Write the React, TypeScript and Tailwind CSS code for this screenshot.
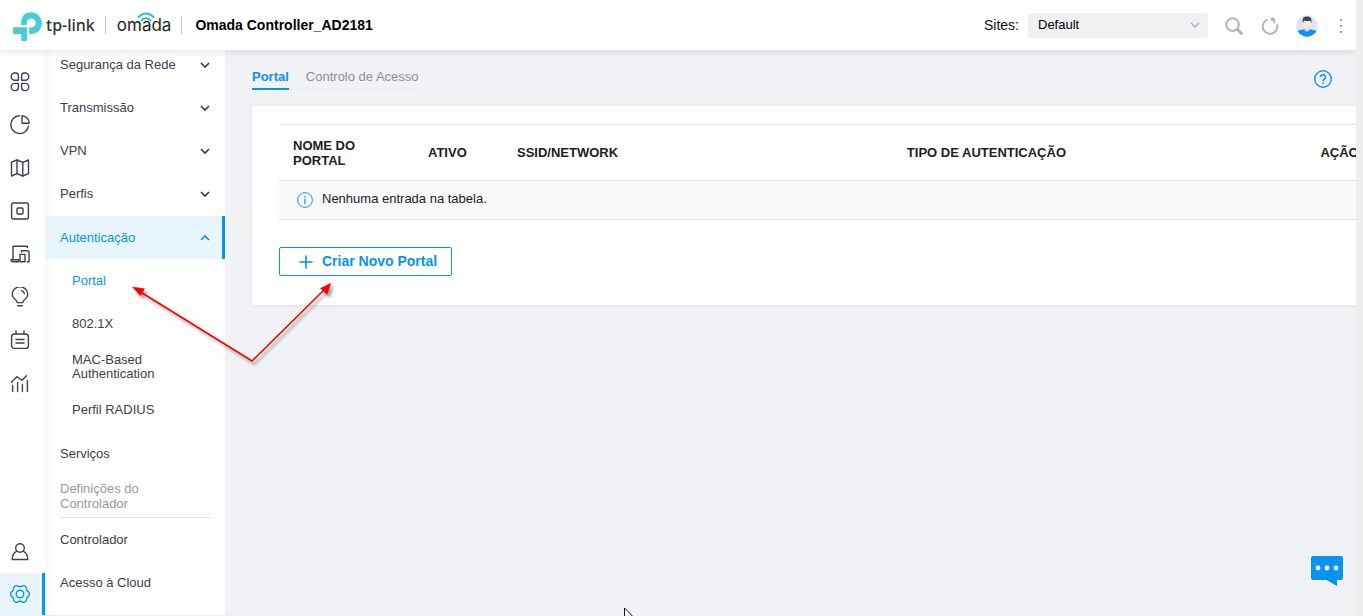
import React from "react";

type IconProps = { children: React.ReactNode; size?: string };

function Icon({ children, size = "size-5" }: IconProps) {
  return (
    <svg
      viewBox="0 0 20 20"
      className={size}
      fill="none"
      stroke="currentColor"
      strokeWidth="1.4"
      strokeLinecap="round"
      strokeLinejoin="round"
      aria-hidden="true"
    >
      {children}
    </svg>
  );
}

const railItems: { label: string; icon: React.ReactNode }[] = [
  {
    label: "Dashboard",
    icon: (
      <>
        <path d="M4.8 1h.7A3 3 0 0 1 8.4 4v4.2H4.8a3.6 3.6 0 0 1 0-7.2Z" />
        <path d="M15.2 1h-.7a3 3 0 0 0-2.9 3v4.2h3.6a3.6 3.6 0 0 0 0-7.2Z" />
        <path d="M4.8 18.6h.7a3 3 0 0 0 2.9-3v-4.2H4.8a3.6 3.6 0 0 0 0 7.2Z" />
        <path d="M15.2 18.6h-.7a3 3 0 0 1-2.9-3v-4.2h3.6a3.6 3.6 0 0 1 0 7.2Z" />
      </>
    ),
  },
  {
    label: "Statistics",
    icon: (
      <>
        <path d="M9.3 .8a8.900 8.900 0 1 0 9.200 10.400" />
        <path d="M12 .8v7.400h7.200A7.400 7.400 0 0 0 12 .8Z" />
      </>
    ),
  },
  {
    label: "Map",
    icon: (
      <>
        <path d="M1.500 4.200 7 2l5.800 2.300 5.700-2.300v13.700l-5.700 2.300-5.800-2.300-5.500 2.300Z" />
        <path d="M7 2v13.600M12.800 4.300v13.600" />
      </>
    ),
  },
  {
    label: "Devices",
    icon: (
      <>
        <rect x="1.600" y="2" width="16.800" height="16" rx="2" />
        <rect x="7" y="7" width="6" height="6" rx="1" />
      </>
    ),
  },
  {
    label: "Clients",
    icon: (
      <>
        <path d="M17.300 3.500V2.200H3v13.200M1 15.800h7.600v2H3a2 2 0 0 1-2-2Z" />
        <path d="M11.500 8V6.800h6a1.600 1.600 0 0 1 1.600 1.600v9.400h-1.800" />
        <path d="M10 10.400h5v7.400h-5Z" />
      </>
    ),
  },
  {
    label: "Insight",
    icon: (
      <>
        <path d="M7.200 15.600c0-3-5-4-5-8.200a7.800 7.600 0 0 1 15.600 0c0 4.200-5 5.200-5 8.200Z" />
        <path d="M7.800 18.800h4.400M11.500 3.600a4.500 4.500 0 0 1 3 3" />
      </>
    ),
  },
  {
    label: "Log",
    icon: (
      <>
        <rect x="1.600" y="4" width="16.800" height="14.400" rx="3" />
        <path d="M6 1v3M14 1v3M6 9.500h8M6 13h8" />
      </>
    ),
  },
  {
    label: "Reports",
    icon: (
      <>
        <path d="M1.800 9.500V8.500L7 3.800l5 3.500 4.500-4.500" />
        <path d="M2.600 12.500v6M7.600 9.500v9M12.400 11.500v7M17.400 7.500v11" />
      </>
    ),
  },
];

function Chevron({ up = false }: { up?: boolean }) {
  return (
    <svg
      viewBox="0 0 10 8"
      className="h-2 w-2.5"
      fill="none"
      stroke="currentColor"
      strokeWidth="1.7"
      aria-hidden="true"
    >
      <path d={up ? "M1 6 5 2l4 4" : "M1 2l4 4 4-4"} />
    </svg>
  );
}

function MenuLink({ label, chevron = false }: { label: string; chevron?: boolean }) {
  return (
    <li>
      <a href="#" className="flex h-[43px] items-center justify-between pr-[15px] pl-[15px]">
        <span>{label}</span>
        {chevron && <Chevron />}
      </a>
    </li>
  );
}

function SubLink({ label, active = false }: { label: string; active?: boolean }) {
  return (
    <li>
      <a
        href="#"
        className={
          active
            ? "flex h-[43px] items-center pr-12 pl-[27px] text-[#0794ee]"
            : "flex h-[43px] items-center pr-12 pl-[27px]"
        }
      >
        {label}
      </a>
    </li>
  );
}

function Header() {
  return (
    <header className="relative z-10 flex h-[50px] shrink-0 items-center bg-white pl-[13px] shadow-[0_1px_8px_rgba(40,45,70,0.14)]">
      <a href="#" className="flex items-center">
        <svg viewBox="0 0 30 30" className="mt-[3px] h-[30px] w-[30px]" fill="#4acbd6" aria-hidden="true">
          <path d="M8.200 13V9.500A9.500 9.500 0 0 1 18 .2a10.900 10.900 0 0 1 0 21.800h-1.800v-6.600h2a4.500 4.500 0 1 0-4.500-4.500V13Z" />
          <path d="M1.200 15.300h13v12.200a1.600 1.600 0 0 1-1.600 1.600H8.200V22H1.200A1.200 1.200 0 0 1 0 20.800v-4.300a1.200 1.200 0 0 1 1.200-1.200Z" />
        </svg>
        <span className="ml-[3px] font-['Noto_Sans',sans-serif] text-[16px] leading-6 font-medium text-[#2d3237]">
          tp-link
        </span>
      </a>
      <span className="ml-[10px] h-[18px] w-px bg-[#c3c8c8]" />
      <span className="relative ml-[11px] font-['Inter',sans-serif] text-[17px] leading-6 font-normal text-[#222]">
        omada
        <svg
          viewBox="0 0 18 11"
          className="absolute -top-px left-[20px] h-[11px] w-[18px]"
          fill="none"
          stroke="#23bfd0"
          strokeWidth="2"
          aria-hidden="true"
        >
          <path d="M1 5.500Q9-2.500 17 5.500M4 8.800Q9 3.600 14 8.800" />
        </svg>
      </span>
      <span className="ml-[10px] h-[18px] w-px bg-[#c3c8c8]" />
      <h1 className="ml-[13px] text-[14px] leading-5 font-bold text-black">Omada Controller_AD2181</h1>

      <div className="ml-auto flex items-center">
        <label htmlFor="site" className="mr-[9px] text-[14px] leading-5 text-[#111]">
          Sites:
        </label>
        <div className="relative flex items-center">
          <select
            id="site"
            className="h-[25px] w-[180px] appearance-none rounded-[3px] bg-[#f0f1f3] pl-[10px] text-[13px] text-black"
          >
            <option>Default</option>
          </select>
          <svg
            viewBox="0 0 10 8"
            className="pointer-events-none absolute right-2 h-2 w-2.5"
            fill="none"
            stroke="#a9adb2"
            strokeWidth="1.3"
            aria-hidden="true"
          >
            <path d="M1 2l4 4 4-4" />
          </svg>
        </div>
        <div className="flex items-center pt-px">
          <button type="button" aria-label="Search" className="ml-[17px] text-[#adb3b6]">
            <svg viewBox="0 0 18 18" className="size-[18px]" fill="none" stroke="currentColor" aria-hidden="true">
              <circle cx="7.600" cy="7.600" r="6.300" strokeWidth="2" />
              <path d="M12.500 12.500l4 4" strokeWidth="3" strokeLinecap="round" />
            </svg>
          </button>
          <button type="button" aria-label="Refresh" className="ml-[18px] text-[#adb3b6]">
            <svg viewBox="0 0 18 18" className="size-[18px]" fill="none" stroke="currentColor" strokeWidth="1.9" aria-hidden="true">
              <path d="M6.500 2.600a7.300 7.300 0 1 0 9.500 4.600" />
              <path d="M10 2.800h3.200V6.200M13.200 2.800 10.500.6" />
            </svg>
          </button>
          <button type="button" aria-label="Account" className="ml-[17px]">
            <svg viewBox="0 0 22 22" className="size-[22px]" aria-hidden="true">
              <defs>
                <clipPath id="avatar">
                  <circle cx="11" cy="11" r="10.700" />
                </clipPath>
              </defs>
              <g clipPath="url(#avatar)">
                <rect width="22" height="22" fill="#dfe5ea" />
                <path d="M0 22v-4.500c2-2.500 5-2.500 8-3.300h6c3 .8 6 .8 8 3.300V22Z" fill="#0794ee" />
                <path d="M8.500 11h5v4q-2.500 3-5 0Z" fill="#ecd2cb" />
                <ellipse cx="11" cy="9.300" rx="3.800" ry="5" fill="#f6e4df" />
                <path d="M6.800 8C6 3.500 7.500 1.500 11 1.500S16.200 3.500 15.300 8l-1-2.200q-3.500.6-6.300-.3Z" fill="#35495b" />
              </g>
            </svg>
          </button>
          <button type="button" aria-label="More" className="mr-[13px] ml-[21px] text-[#9da2a6]">
            <svg viewBox="0 0 4 16" className="h-4 w-1" fill="currentColor" aria-hidden="true">
              <rect x="1" y="1" width="2" height="2" />
              <rect x="1" y="7" width="2" height="2" />
              <rect x="1" y="13" width="2" height="2" />
            </svg>
          </button>
        </div>
      </div>
    </header>
  );
}

function Rail() {
  return (
    <nav aria-label="Main" className="flex w-[45px] shrink-0 flex-col justify-between bg-white pt-[10px] text-[#3a4150]">
      <ul>
        {railItems.map((item) => (
          <li key={item.label}>
            <a href="#" aria-label={item.label} className="flex h-[43px] items-center pl-[10px]">
              <Icon>{item.icon}</Icon>
            </a>
          </li>
        ))}
      </ul>
      <ul>
        <li>
          <a href="#" aria-label="Account" className="flex h-[43px] items-center pl-[10px]">
            <Icon>
              <circle cx="10" cy="6" r="4.300" />
              <path d="M6.800 9.200c-3 1.500-4.600 4.300-4.600 8.300h15.600c0-4-1.600-6.800-4.600-8.300" />
            </Icon>
          </a>
        </li>
        <li>
          <a
            href="#"
            aria-label="Settings"
            className="flex h-[42px] items-center border-r-3 border-[#0794ee] bg-[#e9f5fd] pl-[10px] text-[#0794ee]"
          >
            <Icon>
              <path d="M7.300 1.900Q10 3.600 12.700 1.900Q13.700 1.300 14.700 2L15.700 2.700Q16.300 3.200 16.300 4.200Q16.300 6.600 18.500 7.900Q19.500 8.700 19.400 10Q19.500 11.300 18.500 12.100Q16.300 13.400 16.300 15.800Q16.300 16.800 15.700 17.300L14.700 18Q13.700 18.700 12.700 18.100Q10 16.400 7.300 18.100Q6.300 18.700 5.300 18L4.300 17.300Q3.700 16.800 3.700 15.800Q3.700 13.400 1.500 12.100Q.5 11.300.6 10Q.5 8.700 1.500 7.900Q3.700 6.600 3.700 4.200Q3.700 3.200 4.300 2.700L5.300 2Q6.300 1.300 7.300 1.900Z" />
              <circle cx="10" cy="10" r="3.800" />
            </Icon>
          </a>
        </li>
      </ul>
    </nav>
  );
}

function SideMenu() {
  return (
    <nav
      aria-label="Settings"
      className="w-[180px] shrink-0 overflow-hidden bg-white text-[13px] leading-[15px] text-[#3a4048] shadow-[inset_7px_0_7px_-5px_rgba(0,0,0,0.05)]"
    >
      <ul className="-mt-[7px]">
        <MenuLink label="Segurança da Rede" chevron />
        <MenuLink label="Transmissão" chevron />
        <MenuLink label="VPN" chevron />
        <MenuLink label="Perfis" chevron />
        <li className="my-px">
          <a
            href="#"
            className="flex h-[43px] items-center justify-between border-r-3 border-[#0794ee] bg-[#e9f5fd] pr-3 pl-[15px] text-[#0794ee]"
          >
            <span>Autenticação</span>
            <Chevron up />
          </a>
          <ul className="leading-[14px]">
            <SubLink label="Portal" active />
            <SubLink label="802.1X" />
            <SubLink label="MAC-Based Authentication" />
            <SubLink label="Perfil RADIUS" />
          </ul>
        </li>
        <MenuLink label="Serviços" />
        <li className="mr-[14px] ml-[15px] flex h-[43px] items-center border-b border-[#e5e6e8] pr-12 text-[#999]">
          Definições do Controlador
        </li>
        <MenuLink label="Controlador" />
        <MenuLink label="Acesso à Cloud" />
      </ul>
    </nav>
  );
}

function PortalCard() {
  return (
    <section className="mt-4 overflow-hidden rounded-l-[3px] bg-white pt-[18px] pb-[29px] pl-[27px] shadow-[0_1px_4px_rgba(40,45,70,0.08)]">
      <table className="w-full table-fixed border-collapse text-left text-[13px] leading-[15px] text-[#1f2022]">
        <colgroup>
          <col className="w-[135px]" />
          <col className="w-[89px]" />
          <col className="w-[36.2%]" />
          <col className="w-[38.4%]" />
          <col />
        </colgroup>
        <thead>
          <tr className="h-14 border-y border-[#e1e3e6]">
            <th className="pr-10 pl-[14px] font-semibold">NOME DO PORTAL</th>
            <th className="pl-[14px] font-semibold">ATIVO</th>
            <th className="pl-[14px] font-semibold">SSID/NETWORK</th>
            <th className="pl-[14px] font-semibold">TIPO DE AUTENTICAÇÃO</th>
            <th className="overflow-hidden pl-[14px] font-semibold whitespace-nowrap">AÇÃO</th>
          </tr>
        </thead>
        <tbody>
          <tr className="h-[39px] border-b border-[#e1e3e6] bg-[#f8f9fb]">
            <td colSpan={5} className="pl-[18px]">
              <div className="flex items-center gap-[9px]">
                <svg
                  viewBox="0 0 16 16"
                  className="size-4"
                  fill="none"
                  stroke="#1a9bef"
                  aria-hidden="true"
                >
                  <circle cx="8" cy="8" r="7.400" />
                  <path d="M8 6.800V12M8 4v1.500" strokeWidth="1.300" />
                </svg>
                <span className="pb-[3px]">Nenhuma entrada na tabela.</span>
              </div>
            </td>
          </tr>
        </tbody>
      </table>
      <button
        type="button"
        className="mt-[27px] flex h-[29px] items-center gap-[9px] rounded-[2px] border border-solid border-[#0794ee] pr-[14px] pl-[19px] text-[14px] font-bold text-[#0794ee]"
      >
        <svg viewBox="0 0 14 14" className="size-[14px]" fill="none" stroke="currentColor" strokeWidth="1.6" aria-hidden="true">
          <path d="M7 .5v13M.5 7h13" />
        </svg>
        Criar Novo Portal
      </button>
    </section>
  );
}

function Annotation() {
  return (
    <svg
      viewBox="0 0 220 90"
      className="pointer-events-none absolute top-[280px] left-[130px] z-20 h-[90px] w-[220px]"
      aria-hidden="true"
    >
      <defs>
        <filter id="arrow-shadow" x="-10%" y="-10%" width="120%" height="130%">
          <feDropShadow dx="2.500" dy="3" stdDeviation="1.500" floodColor="#000" floodOpacity="0.400" />
        </filter>
      </defs>
      <g filter="url(#arrow-shadow)" stroke="#f30000" strokeWidth="1.600" fill="#f30000">
        <path d="M9 11 122 81 195 9" fill="none" />
        <path d="M2.500 7 14.500 8.800 10.500 15.800Z" strokeWidth=".5" />
        <path d="M200.800 3.200 197 14.500 190.500 8.300Z" strokeWidth=".5" />
      </g>
    </svg>
  );
}

export default function App() {
  return (
    <div className="relative h-screen overflow-hidden bg-[#eee] pr-[7px] pb-px font-['Liberation_Sans',Arial,sans-serif]">
      <div className="flex h-full flex-col overflow-hidden">
        <Header />
        <div className="flex min-h-0 flex-1">
          <Rail />
          <SideMenu />
          <main className="relative min-w-0 flex-1 bg-[#f0f2f5] pt-4 pl-[27px]">
            <div className="flex items-start justify-between pr-6">
              <div role="tablist" className="flex h-6 border-b border-[#e8eaec] text-[13px] leading-5">
                <button
                  type="button"
                  role="tab"
                  aria-selected="true"
                  className="-mb-px border-b-2 border-[#0794ee] font-bold text-[#0794ee]"
                >
                  Portal
                </button>
                <button type="button" role="tab" aria-selected="false" className="ml-[17px] pb-px text-[#8d9094]">
                  Controlo de Acesso
                </button>
              </div>
              <button type="button" aria-label="Help" className="mt-1">
                <svg
                  viewBox="0 0 18 18"
                  className="size-[18px]"
                  fill="none"
                  stroke="#1296ee"
                  strokeWidth="1.4"
                  aria-hidden="true"
                >
                  <circle cx="9" cy="9" r="8.300" />
                  <path d="M6.500 7.200a2.500 2.500 0 1 1 3.800 2.100C9.300 9.900 9 10.200 9 11.200M9 12.500V14" strokeWidth="1.600" />
                </svg>
              </button>
            </div>
            <PortalCard />
            <button type="button" aria-label="Chat" className="absolute right-[13px] bottom-[29px]">
              <svg viewBox="0 0 32 30" className="h-[30px] w-8" aria-hidden="true">
                <path
                  d="M2 0h28a2 2 0 0 1 2 2v20a2 2 0 0 1-2 2h-4v6l-10.500-6H2a2 2 0 0 1-2-2V2a2 2 0 0 1 2-2Z"
                  fill="#0794ee"
                />
                <g fill="#fff">
                  <circle cx="7" cy="12" r="2.400" />
                  <circle cx="16" cy="12" r="2.400" />
                  <circle cx="25" cy="12" r="2.400" />
                </g>
              </svg>
            </button>
          </main>
        </div>
      </div>
      <Annotation />
      <svg viewBox="0 0 12 19" className="pointer-events-none absolute top-[607px] left-[624px] h-[19px] w-3" aria-hidden="true">
        <path d="M.5 1v16l4-3.500 2.500 5 2-1-2.300-4.800H12Z" fill="#fff" stroke="#111122" />
      </svg>
    </div>
  );
}
